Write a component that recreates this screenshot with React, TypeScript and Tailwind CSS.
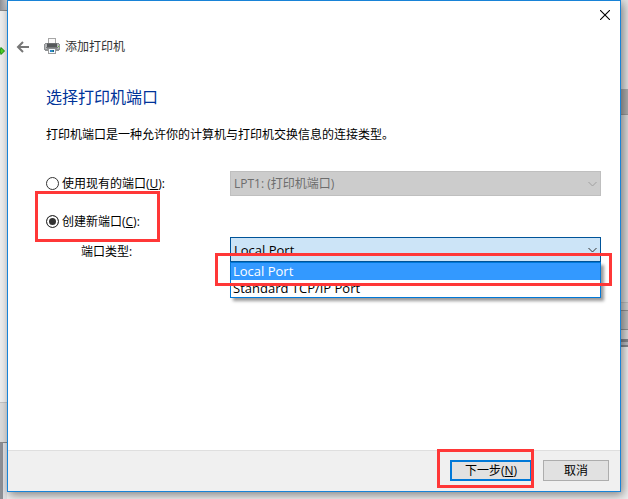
import type { ReactNode } from "react";

const portTypes = ["Local Port", "Standard TCP/IP Port"];

function BackIcon() {
  return (
    <svg width="14" height="12" viewBox="0 0 14 12" fill="none" stroke="#777777" strokeWidth="2">
      <path d="M2 6H13" />
      <path d="M7 1L2 6l5 5" />
    </svg>
  );
}

function PrinterIcon() {
  return (
    <svg width="16" height="17" viewBox="0 0 16 17" shapeRendering="crispEdges">
      <rect x="4" y="0" width="8" height="6" fill="#a6a6a6" />
      <rect x="5" y="1" width="6" height="5" fill="#fafafa" />
      <rect x="1" y="5" width="14" height="8" fill="#8f9294" />
      <rect x="0" y="6" width="16" height="6" fill="#8f9294" />
      <rect x="1" y="6" width="14" height="5" fill="#b4b6b8" />
      <rect x="3" y="5" width="10" height="1" fill="#6d6f71" />
      <rect x="3" y="6" width="10" height="3" fill="#55585a" />
      <rect x="2" y="9" width="12" height="1" fill="#77797b" />
      <rect x="3" y="10" width="10" height="1" fill="#8b8d8f" />
      <rect x="14" y="8" width="1" height="1" fill="#63c132" />
      <rect x="4" y="11" width="8" height="5" fill="#9c9c9c" />
      <rect x="5" y="11" width="6" height="4" fill="#f4fbff" />
      <rect x="6" y="12" width="2" height="2" fill="#2f86d0" />
      <rect x="8" y="12" width="1" height="2" fill="#1f9a8c" />
      <rect x="9" y="12" width="1" height="2" fill="#1c4f9c" />
    </svg>
  );
}

function CloseIcon() {
  return (
    <svg width="10" height="10" viewBox="0 0 10 10" stroke="#000000" strokeWidth="1.1">
      <path d="M0 0l10 10M10 0L0 10" />
    </svg>
  );
}

function Chevron({ className }: { className: string }) {
  return (
    <svg
      className={`pointer-events-none absolute top-1/2 right-1 -translate-y-1/2 ${className}`}
      width="9"
      height="5"
      viewBox="0 0 9 5"
      fill="none"
      stroke="currentColor"
    >
      <path d="M0.5 0.5l4 4 4-4" />
    </svg>
  );
}

// Red frame drawn over the step the reader has to follow
function Highlight({ className }: { className: string }) {
  return (
    <span
      aria-hidden="true"
      className={`pointer-events-none absolute z-20 border-3 border-[#ff3737] ${className}`}
    />
  );
}

function PortRadio({
  id,
  checked,
  children
}: {
  id: string;
  checked?: boolean;
  children: ReactNode;
}) {
  return (
    <div className="flex h-[25px] items-center gap-[3px]">
      <input
        id={id}
        type="radio"
        name="port"
        defaultChecked={checked}
        className="size-[13px] appearance-none rounded-full border border-[#333333] bg-white checked:bg-[#333333] checked:shadow-[inset_0_0_0_2px_white]"
      />
      <label htmlFor={id}>{children}</label>
    </div>
  );
}

// Edges of the windows that stand behind the dialog
function LeftBackdrop() {
  return (
    <div className="flex w-[7px] shrink-0 flex-col overflow-hidden">
      <div className="h-[11px] border-b border-[#8a8a8a] bg-linear-to-r from-[#8e9096] to-[#c9cacd]" />
      <div className="flex-1 bg-[#efefef] pt-[36px]">
        <svg width="5" height="8" viewBox="0 0 5 8">
          <path d="M0 2h1V0.5L4.5 4 1 7.5V6H0z" fill="#52d22c" stroke="#1b8a0c" />
        </svg>
      </div>
      <div className="h-[41px] border-t border-b border-t-[#c4c4c4] border-b-[#8a8a8a] bg-[#dcdcdc]" />
      <div className="h-14 border-r-4 border-[#dfe1e5] bg-[#8e9096]" />
    </div>
  );
}

function RightBackdrop() {
  return (
    <div className="flex w-[7px] shrink-0 flex-col bg-[#e2e2e2]">
      <div className="h-[89px]" />
      <div className="h-[26px] border-b border-[#999999] bg-[#acacac]" />
      <div className="h-[187px] bg-[#dadada]" />
      <div className="h-[9px] border-t border-b border-t-[#bdbdbd] border-b-[#909090] bg-[#d0d0d0]" />
      <div className="h-[19px] border-b border-[#909090] bg-[#bdbdbd]" />
      <div className="h-[9px] bg-[#dadada]" />
      <div className="h-[8px] border-t-3 border-b-2 border-[#85878c] bg-[#b9bcc2]" />
      <div className="flex-1 bg-[#eeeeee]" />
    </div>
  );
}

export default function App() {
  return (
    <div className="flex min-h-screen bg-[#efefef] font-['Open_Sans','Noto_Sans_CJK_SC',sans-serif] text-[12px] leading-4 text-black">
      <LeftBackdrop />

      <div className="relative z-10 flex min-w-0 flex-1 flex-col pb-[7px]">
        <main className="flex flex-1 flex-col border border-[#1883d7] bg-white shadow-[2px_3px_9px_rgba(0,0,0,0.45)]">
          <div className="flex justify-end">
            <button
              type="button"
              aria-label="关闭"
              className="flex h-7 w-[30px] items-center justify-center"
            >
              <CloseIcon />
            </button>
          </div>

          <header className="flex h-[35px] items-center pl-2">
            <button type="button" aria-label="返回">
              <BackIcon />
            </button>
            <span className="ml-[14px]">
              <PrinterIcon />
            </span>
            <span className="ml-[5px] text-[#333333]">添加打印机</span>
          </header>

          <section className="flex-1 pt-[23px] pr-[19px] pl-[38px]">
            <h1 className="text-[16px] leading-5 text-[#003399]">选择打印机端口</h1>
            <p className="mt-5">打印机端口是一种允许你的计算机与打印机交换信息的连接类型。</p>

            <form className="mt-7 grid grid-cols-[184px_1fr]">
              <PortRadio id="existing">
                使用现有的端口(<u>U</u>):
              </PortRadio>
              <div className="relative">
                <select
                  aria-label="使用现有的端口"
                  disabled
                  className="block h-[25px] w-full appearance-none border border-[#bfbfbf] bg-[#cccccc] px-[3px] text-[#6d6d6d] opacity-100"
                >
                  <option>LPT1: (打印机端口)</option>
                </select>
                <Chevron className="text-[#a0a0a0]" />
              </div>

              <div className="relative col-span-2 mt-[13px]">
                <PortRadio id="create" checked>
                  创建新端口(<u>C</u>):
                </PortRadio>
                <Highlight className="-top-[18px] -left-[11px] h-[51px] w-[125px]" />
              </div>

              <label htmlFor="port-type" className="mt-[3px] pt-[7px] pl-[35px]">
                端口类型:
              </label>
              <div className="relative mt-[3px]">
                <div className="relative">
                  <select
                    id="port-type"
                    defaultValue={portTypes[0]}
                    className="block h-[25px] w-full appearance-none border border-[#005499] bg-[#cce4f7] px-[3px] text-[13px]"
                  >
                    {portTypes.map((type) => (
                      <option key={type}>{type}</option>
                    ))}
                  </select>
                  <Chevron className="text-[#333333]" />
                </div>
                <ul
                  role="listbox"
                  aria-label="端口类型"
                  className="absolute top-full right-0 left-0 z-10 border border-[#0078d7] bg-white text-[13px] leading-[17px] shadow-[3px_3px_3px_rgba(0,0,0,0.4)]"
                >
                  {portTypes.map((type, i) => (
                    <li
                      key={type}
                      role="option"
                      aria-selected={i === 0}
                      className={i === 0 ? "bg-[#3399ff] px-[2px] text-white" : "px-[2px]"}
                    >
                      {type}
                    </li>
                  ))}
                </ul>
                <Highlight className="top-4 -right-[11px] -left-[15px] h-[33px]" />
              </div>
            </form>
          </section>

          <footer className="flex justify-end gap-[11px] border-t border-[#dfdfdf] bg-[#f0f0f0] pt-[9px] pr-[11px] pb-[10px]">
            <div className="relative">
              <button
                type="button"
                className="flex h-[21px] w-[82px] items-center justify-center border-2 border-[#0078d7] bg-[#e1e1e1]"
              >
                下一步(<u>N</u>)
              </button>
              <Highlight className="-top-[11px] -right-[2px] -left-[13px] h-[39px]" />
            </div>
            <button
              type="button"
              className="flex h-[21px] w-[66px] items-center justify-center border border-[#adadad] bg-[#e1e1e1]"
            >
              取消
            </button>
          </footer>
        </main>
      </div>

      <RightBackdrop />
    </div>
  );
}
